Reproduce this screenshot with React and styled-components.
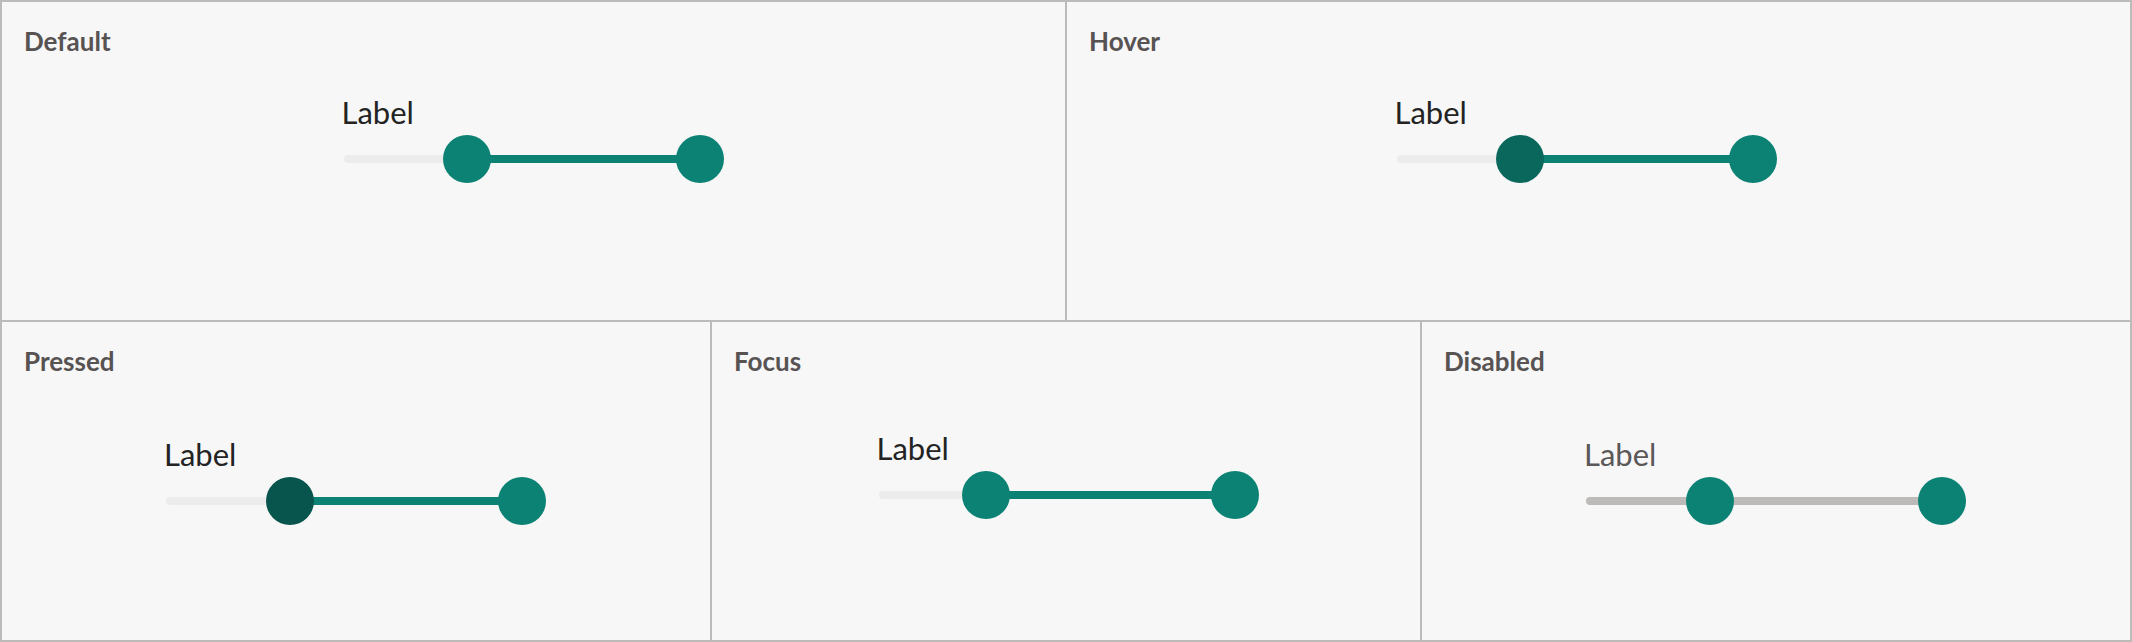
import React from "react";
import styled, { createGlobalStyle } from "styled-components";

const Global = createGlobalStyle`
  html, body { margin: 0; padding: 0; background: #f7f7f7; }
  body { font-family: Lato, "Open Sans", sans-serif; }
`;

const Board = styled.div`
  width: 2132px;
  height: 642px;
  box-sizing: border-box;
  background: #bdbaba;
  padding: 2px;
  display: grid;
  grid-template-rows: 1fr 1fr;
  gap: 2px;
`;

const Row = styled.div`
  display: grid;
  grid-template-columns: repeat(${(p) => p.$cols}, 1fr);
  gap: 2px;
  min-height: 0;
`;

const Panel = styled.section`
  background: #f7f7f7;
  padding: 24px 22px;
  display: flex;
  flex-direction: column;
  min-width: 0;
`;

const Heading = styled.h3`
  margin: 0;
  font-family: Lato, sans-serif;
  font-weight: 700;
  font-size: 26px;
  line-height: 1.2;
  color: #575353;
`;

const Stage = styled.div`
  display: flex;
  justify-content: center;
  padding-top: ${(p) => p.$top}px;
  padding-left: ${(p) => Math.max(0, p.$dx || 0)}px;
  padding-right: ${(p) => Math.max(0, -(p.$dx || 0))}px;
`;

const SliderBox = styled.div`
  width: 380px;
  display: flex;
  flex-direction: column;
  gap: 4px;
`;

const Label = styled.label`
  font-family: Lato, sans-serif;
  font-size: 31px;
  line-height: 1.2;
  color: ${(p) => (p.$disabled ? "#5b5858" : "#232323")};
  margin-left: -2px;
`;

const Rail = styled.div`
  position: relative;
  height: 48px;
  display: flex;
  align-items: center;
`;

const Track = styled.div`
  width: 100%;
  height: 8px;
  border-radius: 4px;
  background: ${(p) => (p.$disabled ? "#bdbaba" : "#ececec")};
`;

const Fill = styled.div`
  position: absolute;
  top: 20px;
  height: 8px;
  background: ${(p) => (p.$disabled ? "#bdbaba" : "#0b8274")};
`;

const Thumb = styled.div`
  position: absolute;
  top: 0;
  width: 48px;
  height: 48px;
  margin-left: -24px;
  border-radius: 50%;
  background: ${(p) => p.$color || "#0b8274"};
`;

const TRAVEL_MIN = 24;
const TRAVEL = 332;
const pos = (v) => TRAVEL_MIN + (TRAVEL * v) / 100;

function RangeSlider({ low, high, lowColor, disabled }) {
  const a = pos(low);
  const b = pos(high);
  return (
    <SliderBox>
      <Label $disabled={disabled}>Label</Label>
      <Rail>
        <Track $disabled={disabled} />
        <Fill $disabled={disabled} style={{ left: a, width: b - a }} />
        <Thumb $color={lowColor} style={{ left: a }} />
        <Thumb style={{ left: b }} />
      </Rail>
    </SliderBox>
  );
}

function StatePanel({ title, top, dx, children }) {
  return (
    <Panel>
      <Heading>{title}</Heading>
      <Stage $top={top} $dx={dx}>
        {children}
      </Stage>
    </Panel>
  );
}

export default function App() {
  return (
    <>
      <Global />
      <Board>
        <Row $cols={2}>
          <StatePanel title="Default" top={37}>
            <RangeSlider low={30} high={100} />
          </StatePanel>
          <StatePanel title="Hover" top={37} dx={-24}>
            <RangeSlider low={30} high={100} lowColor="#0a675c" />
          </StatePanel>
        </Row>
        <Row $cols={3}>
          <StatePanel title="Pressed" top={59}>
            <RangeSlider low={30} high={100} lowColor="#07554d" />
          </StatePanel>
          <StatePanel title="Focus" top={53} dx={5}>
            <RangeSlider low={25} high={100} />
          </StatePanel>
          <StatePanel title="Disabled" top={59}>
            <RangeSlider low={30} high={100} disabled />
          </StatePanel>
        </Row>
      </Board>
    </>
  );
}
